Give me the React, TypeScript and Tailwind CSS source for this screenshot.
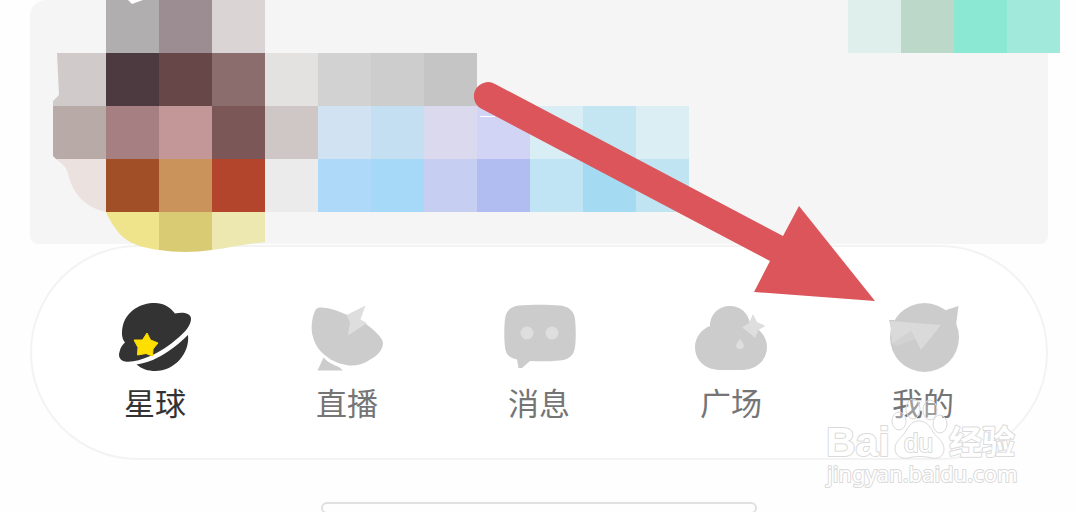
import type { ReactNode } from 'react'

interface Tab {
  label: string
  icon: ReactNode
  active?: boolean
}

const CELL = 53

// Blurred avatar + name, one entry per cell: column, row, colour
const CELLS: [number, number, string][] = [
  [1, 0, '#b0aeaf'], [2, 0, '#9c8d92'], [3, 0, '#dbd4d4'],
  [1, 1, '#4d3a41'], [2, 1, '#674747'], [3, 1, '#8c6d6e'], [4, 1, '#e3e2e0'],
  [5, 1, '#d2d2d2'], [6, 1, '#cdcdce'], [7, 1, '#c5c5c6'],
  [1, 2, '#a57f82'], [2, 2, '#c39698'], [3, 2, '#7c5757'], [4, 2, '#cfc6c6'],
  [5, 2, '#d1e3f3'], [6, 2, '#c4dff1'], [7, 2, '#dad9ed'], [8, 2, '#d1d4f4'],
  [9, 2, '#d8edf4'], [10, 2, '#c4e6f3'], [11, 2, '#dbeef4'],
  [1, 3, '#a04f27'], [2, 3, '#c9935b'], [3, 3, '#b2452c'], [4, 3, '#ecebec'],
  [5, 3, '#afd9f8'], [6, 3, '#a6d8f8'], [7, 3, '#c6cef1'], [8, 3, '#b1bcf0'],
  [9, 3, '#c0e4f4'], [10, 3, '#a4dbf2'], [11, 3, '#c0e4f2'],
]

const BADGE_COLORS = ['#dfefeb', '#bcd8c9', '#8ae8d3', '#a1eadb']

const TABS: Tab[] = [
  {
    label: '星球',
    active: true,
    icon: (
      <>
        <path fill="#333" d="M60 15.500C67 14 75 14.500 76 20C76.500 27 70 34 63 40C55 47 45 54 34 58.500C26 62 17 64.500 10 63.500C5 63 3 58 4.500 54C5.500 49 8 46 10 44.500C7 41 6 35 8 27C12 13 25 5 40 5C48 5 55 9 60 15.500Z" />
        <path fill="#333" d="M21.500 66.500C32 65 44 60 53 53.500C61 48 67 43 73 37C75 55 60 73 40 73C33 73 27 71 21.500 66.500Z" />
        <path fill="#ffdf00" stroke="#ffdf00" strokeLinejoin="round" d="M32 35L35.500 42L43 45L38 51L37.500 58L31 55.500L22.500 57L23 49.500L19 42L27.500 42Z" />
      </>
    ),
  },
  {
    label: '直播',
    icon: (
      <>
        <path fill="#ccc" d="M5 35C4 28 5 20 7.500 14C9 10 11 9 15 9.500C23 10 31 13 38 16C46 19 54 23 59 26C67 32 76 40 76 45C76 52 70 58 64 61C57 66 50 68 42 67.500C32 66 25 63 19 58C11 52 7 45 5 35Z" />
        <path fill="#ccc" d="M16.500 59.500C21 64.500 27 67.500 32 69L36 72.500H10.500Z" />
        <path fill="#dedede" d="M58.500 7.500L39.500 17L43 24L41 37.500L60 25L53.500 21.500Z" />
      </>
    ),
  },
  {
    label: '消息',
    icon: (
      <>
        <path fill="#ccc" d="M20 7.500C32 6.500 50 6.500 61 7.500C70 8.500 75 13 76 21C77 30 77 41 76 49C75 57 70 62 61 62.500C52 63.500 40 63.500 31 63L23 70H19.500L18 61.500C10 60 6.500 56 6 49C5 41 5 29 6 21C7 13 12 8 20 7.500Z" />
        <circle cx="28" cy="35" r="6.500" fill="#dedede" />
        <circle cx="53" cy="35" r="6.500" fill="#dedede" />
      </>
    ),
  },
  {
    label: '广场',
    icon: (
      <>
        <path fill="#ccc" d="M19 28C19 16 28 8 39 8C50 8 58 16 59 26C69 31 76 39 76 49C76 63 64 72 51 72H30C15 72 4 63 4 49C4 39 11 31 19 28Z" />
        <path fill="#dedede" d="M62 16L66 24L74.500 28L67.500 32L64 40L58.500 35L51 29.500L58 25Z" />
        <path fill="#dedede" d="M49 41L52 45C54 49 52 51 49 51C46 51 44 49 46 45Z" />
      </>
    ),
  },
  {
    label: '我的',
    icon: (
      <>
        <circle cx="41.500" cy="39.500" r="34.500" fill="#ccc" />
        <path fill="#ccc" d="M60 13L75.500 8L73 27Z" />
        <path fill="#ccc" d="M6 22L12 22L9 34Z" />
        <path fill="#dadada" d="M7 23L58 27L38 52L28 33L9 46L8 34Z" />
        <path fill="#d2d2d2" d="M28 33L9 46L15 48L32 41Z" />
      </>
    ),
  },
]

function ProfileCard() {
  return (
    <section className="mx-7 flex h-[244px] justify-between rounded-t-2xl rounded-b-lg bg-[#f5f5f5] pl-[23px]">
      <svg width="636" height="254" viewBox="0 0 636 254" className="relative z-10 shrink-0" aria-hidden="true">
        <path fill="#d1caca" d="M4 53H53V106H0V101L6 95Z" />
        <path fill="#b7aaa7" d="M0 106H53V159H3L0 156Z" />
        <path fill="#ebe2e0" d="M3 159H53V212C34 208 20 195 15 174C14 167 9 164 3 159Z" />
        {CELLS.map(([col, row, color]) => (
          <rect key={`${col}-${row}`} x={col * CELL} y={row * CELL} width={CELL} height={CELL} fill={color} />
        ))}
        <path fill="#efe48b" d="M53 212H106V250C84 247 74 242 66 233C60 226 56 219 53 212Z" />
        <path fill="#d9cb74" d="M106 212H159V250Q132 254 106 250Z" />
        <path fill="#ede7b0" d="M159 212H212V242C193 244 176 248 159 250Z" />
        <path fill="#fff" d="M75 0L79 4L90 0Z" />
        <path stroke="#fff" strokeWidth="1" d="M427 116.500H442" />
      </svg>
      <svg width="212" height="53" viewBox="0 0 212 53" className="-mr-3 shrink-0" aria-hidden="true">
        {BADGE_COLORS.map((color, i) => (
          <rect key={color} x={i * CELL} width={CELL} height={CELL} fill={color} />
        ))}
      </svg>
    </section>
  )
}

function TabBar() {
  return (
    <nav className="mx-7 mt-px grid grid-cols-5 rounded-full border-2 border-[#f3f3f3] bg-white px-[27px] pt-[51px] pb-9">
      {TABS.map(tab => (
        <button key={tab.label} type="button" className="flex flex-col items-center gap-1">
          <svg width="80" height="80" viewBox="0 0 80 80" aria-hidden="true">{tab.icon}</svg>
          <span className={`text-[31px] leading-10 ${tab.active ? 'text-[#333]' : 'text-[#757575]'}`}>
            {tab.label}
          </span>
        </button>
      ))}
    </nav>
  )
}

function Arrow() {
  return (
    <svg width="402" height="222" viewBox="474 81 402 222" className="pointer-events-none absolute top-[81px] left-[474px] z-20" aria-hidden="true">
      <path fill="#db555a" d="M495 84L783 236L799 206L875 301L754 292L770 261L481 108.500A14 14 0 0 1 495 84Z" />
    </svg>
  )
}

function Watermark() {
  return (
    <svg width="206" height="96" viewBox="820 396 206 96" className="pointer-events-none absolute right-[50px] bottom-5 z-20" fill="#fff" stroke="#dadada" strokeWidth="2" strokeLinejoin="round">
      <g strokeWidth="1" fillOpacity="0.3">
        <ellipse cx="913" cy="409" rx="7" ry="10" />
        <ellipse cx="930" cy="410" rx="7" ry="10" />
        <ellipse cx="899" cy="421" rx="7" ry="9" />
        <ellipse cx="940" cy="424" rx="7" ry="9" />
      </g>
      <path strokeWidth="1" d="M919 421C926 421 930 426 933 432C937 438 944 441 944 449C944 456 939 459 932 458C923 456 916 456 908 458C901 459 895 456 895 448C895 441 903 437 906 431C909 425 913 421 919 421Z" />
      <g style={{ paintOrder: 'stroke' }}>
        <text x="826" y="456" fontSize="41" fontWeight="700" fontFamily="'Liberation Sans', sans-serif">Bai</text>
        <text x="904" y="452" fontSize="26" fontFamily="'Liberation Sans', sans-serif">du</text>
        <text x="949" y="454" fontSize="33" fontWeight="700" fontFamily="'Noto Sans CJK SC', sans-serif">经验</text>
        <text x="827" y="482" fontSize="22" fontFamily="'Noto Sans', sans-serif">jingyan.baidu.com</text>
      </g>
    </svg>
  )
}

export default function App() {
  return (
    <main className="relative flex h-screen flex-col overflow-hidden bg-[#fefefe] pl-0.5 font-['Noto_Sans_CJK_SC',sans-serif]">
      <ProfileCard />
      <TabBar />
      <div className="mx-auto mt-[42px] h-3 w-[436px] shrink-0 rounded-full border-2 border-[#e0e0e0]" />
      <Arrow />
      <Watermark />
    </main>
  )
}
